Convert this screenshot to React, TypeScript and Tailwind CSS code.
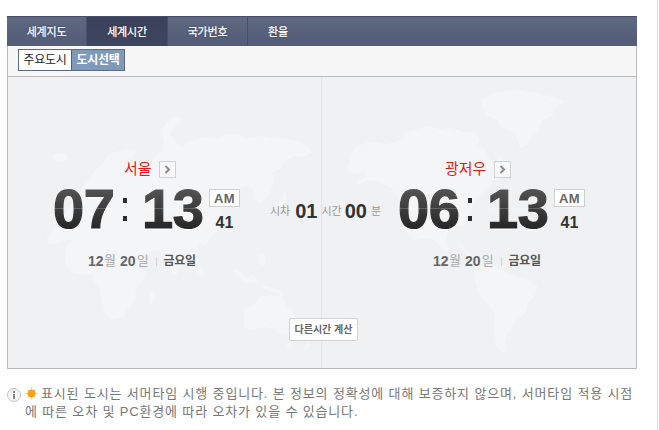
const tabs = [
  { label: "세계지도", width: "w-[80px]", active: false },
  { label: "세계시간", width: "w-[81px]", active: true },
  { label: "국가번호", width: "w-[80px]", active: false },
  { label: "환율", width: "w-[60px] border-r-0", active: false },
];

function WorldMap() {
  return (
    <svg className="absolute inset-0 h-full w-full blur-[0.5px]" viewBox="8 77 628 291" fill="#f4f5f7">
      {/* iceland */}
      <path d="M52 155l8-2 7 2 1 4-7 3-8-2z" />
      {/* europe + asia */}
      <path d="M95 170l8-6 4-8 8-4 12-3 10 2-4 6-8 3 2 4 9-2 12 3 6-8 8-6 2-10-3-10 6-9 8-5 6 3-6 6-5 7 4 8 8 5 12-6 10-3 14 2 4-4 14-1 12 4 14-2 14 2 20 3 12 5 4 7-8 4-10-1-8 4-6 9-8 4 2 10-5 12-8 8-8-3 1-10-6-4-10 3-12 10-6 12 4 9-6 10-8 9-4 7-6-3-4 8 3 12 6 10-4 3-8-8-5-11-4 6-8 12-5-1-4-10-3-10-10-4-12 6 3 8-14 8-8-8-5-12-8-4-6 2-10 2-8 3-10-1-4-5 4-6-6-3-8 1-8 3-6-1-1-5 4-4z" />
      {/* africa */}
      <path d="M66 246l10-8 14-3 12 2 7 5 14 2 6 9 8 15 9 4-3 8-8 10 1 9-9 10-3 8-14 2-5-6-4-14-1-11-6-7-2-7-9 1-12-3-6-9z" />
      <path d="M150 293l4-3 1 8-3 8-3-3z" />
      {/* islands of south east asia */}
      <path d="M233 269l8 3 6 6 6-3 5 6-7 3-8-3-6-5z" />
      <path d="M258 256l4-3 4 8-3 5-5-4z" />
      <path d="M262 285l14 4 6 3-4 1-14-3z" />
      {/* australia */}
      <path d="M244 309l10-5 6-7 10-2 7 2 4-5 4 12 6 5 6 9-2 9-7 6-9 1-5-5-9-2-15 3-6-4z" />
      <path d="M286 343l5-1 1 5-5 1z" />
      <path d="M306 341l6 4-5 5-3-2z" />
      {/* japan */}
      <path d="M281 200l3-8 3 2-1 8-5 6-6 2 0-4z" />
      {/* alaska and canada */}
      <path d="M354 148l14-6 18 2 12-3 8-8 12-4 12-3 8 3 14-1 10 4 12 0 6 7-3 6 8 4 4 10 6 4 6-6 4 8 8 4-6 8-14 4-8 10-8 6-4 10-2 8-6 4-1 8-8-2-8 6-2 10 4 10-8-3-6-7-9-3-12 2-7-5-6-10-2-10 3-9-6-10-6-8-12-6-10-2-14 6 4-5 8-6-4-3-8 2-6-1-2-5z" />
      {/* greenland */}
      <path d="M482 99l14-6 18-3 20 2 18 5 12 4-8 6-4 8-10 6-4 10-6 6-4 8-8 3-3-10-7-8-10-3-2-7-10-4-6-8z" />
      {/* central and south america */}
      <path d="M455 240l6 5 5 6 7 6 6-3 5 2-8-1-4 3 3 6z" />
      <path d="M474 270l8-6 10 1 11 6 14 6 12 4 9 6-4 10-6 6-2 10-8 5-4 8-6 6-3 10 3 9-6 2-6-8-2-16 1-14-6-10-8-7-4-11-2-8z" />
    </svg>
  );
}

function Clock({ city, hour, className, nameClass }: { city: string; hour: string; className: string; nameClass: string }) {
  return (
    <div className={`flex w-[187px] shrink-0 flex-col ${className}`}>
      <div className={`flex h-[18px] items-center ${nameClass}`}>
        <span className="mb-[2px] text-[15px] leading-none text-[#e8170f]">{city}</span>
        <span className="flex h-[17px] w-[17px] items-center justify-center border border-[#d2d2d2] bg-[#f8f8f8]">
          <svg width="7" height="9" viewBox="0 0 7 9" fill="none" stroke="#8b8b8b" strokeWidth="2">
            <path d="M1.5 1l3.5 3.5L1.5 8" />
          </svg>
        </span>
      </div>
      <div className="mt-[7px] flex h-[48px]">
        <Digits value={hour} />
        <div className="flex w-[28px] shrink-0 flex-col items-center gap-[13px] pt-[13px] pr-[6px]">
          <span className="h-[5px] w-[4px] bg-[#2b2c35]" />
          <span className="h-[5px] w-[4px] bg-[#2b2c35]" />
        </div>
        <Digits value="13" />
        <div className="ml-[6px] flex w-[31px] shrink-0 flex-col items-center pt-[4px]">
          <span className="flex h-[18px] w-[31px] items-center justify-center border border-[#cfcfcf] bg-white text-[13px] font-bold leading-none tracking-[0.5px] text-[#666]">
            AM
          </span>
          <span className="mt-[8px] text-[16px] font-bold leading-[16px] text-[#333]">41</span>
        </div>
      </div>
      <div className="mt-[20px] flex h-[16px] items-center pl-[35px]">
        <span className="text-[14px] font-bold text-[#666]">12</span>
        <span className="ml-[0.5px] text-[13px] text-[#aaa]">월</span>
        <span className="ml-[4px] text-[14px] font-bold text-[#666]">20</span>
        <span className="ml-px text-[13px] text-[#aaa]">일</span>
        <span className="ml-[7px] mr-[7px] h-[9px] w-px bg-[#d4d4d4]" />
        <span className="text-[12px] font-bold tracking-[-0.3px] text-[#555]">금요일</span>
      </div>
    </div>
  );
}

function Digits({ value }: { value: string }) {
  return (
    <div className="relative w-[61px] shrink-0">
      <span className="block bg-gradient-to-b from-[#585858] to-[#222] bg-clip-text text-[56px] font-bold leading-[48px] tracking-[-0.5px] text-transparent [-webkit-text-stroke:1.2px_transparent] [filter:drop-shadow(0_1px_0_#fff)]">
        {value}
      </span>
      <span className="absolute left-0 right-0 top-[23px] h-px bg-white/20" />
    </div>
  );
}

export default function App() {
  return (
    <div className="flex h-[430px] w-[659px] overflow-hidden bg-white font-['Liberation_Sans','Noto_Sans_CJK_KR',sans-serif]">
      <div className="w-[657px] pl-[7px] pt-[16px]">
        <div className="w-[630px]">
          <div className="flex h-[30px] border-t border-[#454d68] bg-gradient-to-b from-[#5f6880] to-[#535c78]">
            {tabs.map((tab) => (
              <div
                key={tab.label}
                className={`flex items-center justify-center border-r border-[#474f6a] pt-px text-[11px] tracking-[-0.2px] text-white [-webkit-text-stroke:0.25px_#fff] [text-shadow:0_0_2px_#2c3248] ${tab.width} ${
                  tab.active ? "bg-gradient-to-b from-[#3a4159] to-[#3e4560]" : ""
                }`}
              >
                {tab.label}
              </div>
            ))}
          </div>

          <div className="flex h-[30px] items-center border-x border-[#bbb] bg-[#f7f7f7] pl-[10px] pb-[3px] pt-[1px]">
            <div className="flex h-[22px] border border-[#5c6a88] bg-white text-[12px] leading-none tracking-[-0.3px]">
              <span className="flex w-[52px] items-center justify-center text-[#222]">주요도시</span>
              <span className="flex w-[53px] items-center justify-center border-l border-[#4d5d80] bg-[#7f9ab8] font-bold text-white">
                도시선택
              </span>
            </div>
          </div>

          <div className="relative h-[293px] border border-[#bbb] bg-[#f0f1f3]">
            <WorldMap />
            <div className="absolute bottom-0 left-[313px] top-0 w-px bg-[#e3e4e6]" />
            <div className="relative flex pl-[45px] pt-[83px]">
              <Clock city="서울" hour="07" className="" nameClass="gap-[7px] pl-[71px]" />
              <div className="ml-[30px] mt-[41px] flex h-[20px] w-[113px] shrink-0 items-center text-[11px] text-[#999]">
                <span>시차</span>
                <span className="ml-[5px] text-[20px] font-bold text-[#333]">01</span>
                <span className="ml-[4px]">시간</span>
                <span className="ml-[3px] text-[20px] font-bold text-[#333]">00</span>
                <span className="ml-[4px]">분</span>
              </div>
              <Clock city="광저우" hour="06" className="ml-[15px]" nameClass="gap-[8px] pl-[47px]" />
            </div>
            <button className="absolute left-[281px] top-[241px] h-[23px] w-[69px] rounded-[2px] border border-[#d2d2d2] bg-white text-[10px] font-bold text-[#666]">
              다른시간 계산
            </button>
          </div>

          <div className="mt-[16px] flex text-[13px] leading-[18px] text-[#777]">
            <svg className="mt-[3px] shrink-0" width="14" height="14" viewBox="0 0 14 14">
              <circle cx="7" cy="7" r="6.5" fill="#f4f4f4" stroke="#c4c4c4" />
              <rect x="6" y="6" width="2" height="5" fill="#888" />
              <rect x="6" y="3" width="2" height="2" fill="#888" />
            </svg>
            <div className="ml-[4px] w-[612px] whitespace-nowrap tracking-[0.85px]">
              <svg className="mr-[3px] inline-block align-[-2px]" width="13" height="13" viewBox="0 0 13 13">
                <g stroke="#fbd9a0" strokeWidth="1">
                  <path d="M6.5 0v13M0 6.5h13M2 2l9 9M11 2l-9 9" />
                </g>
                <circle cx="6.5" cy="6.5" r="4" fill="#f9a11b" />
              </svg>
              표시된 도시는 서머타임 시행 중입니다. 본 정보의 정확성에 대해 보증하지 않으며, 서머타임 적용 시점
              <br />
              에 따른 오차 및 PC환경에 따라 오차가 있을 수 있습니다.
            </div>
          </div>
        </div>
      </div>
      <div className="w-[2px] border-l border-[#e4e4e4] bg-[#f8f8f8]" />
    </div>
  );
}
